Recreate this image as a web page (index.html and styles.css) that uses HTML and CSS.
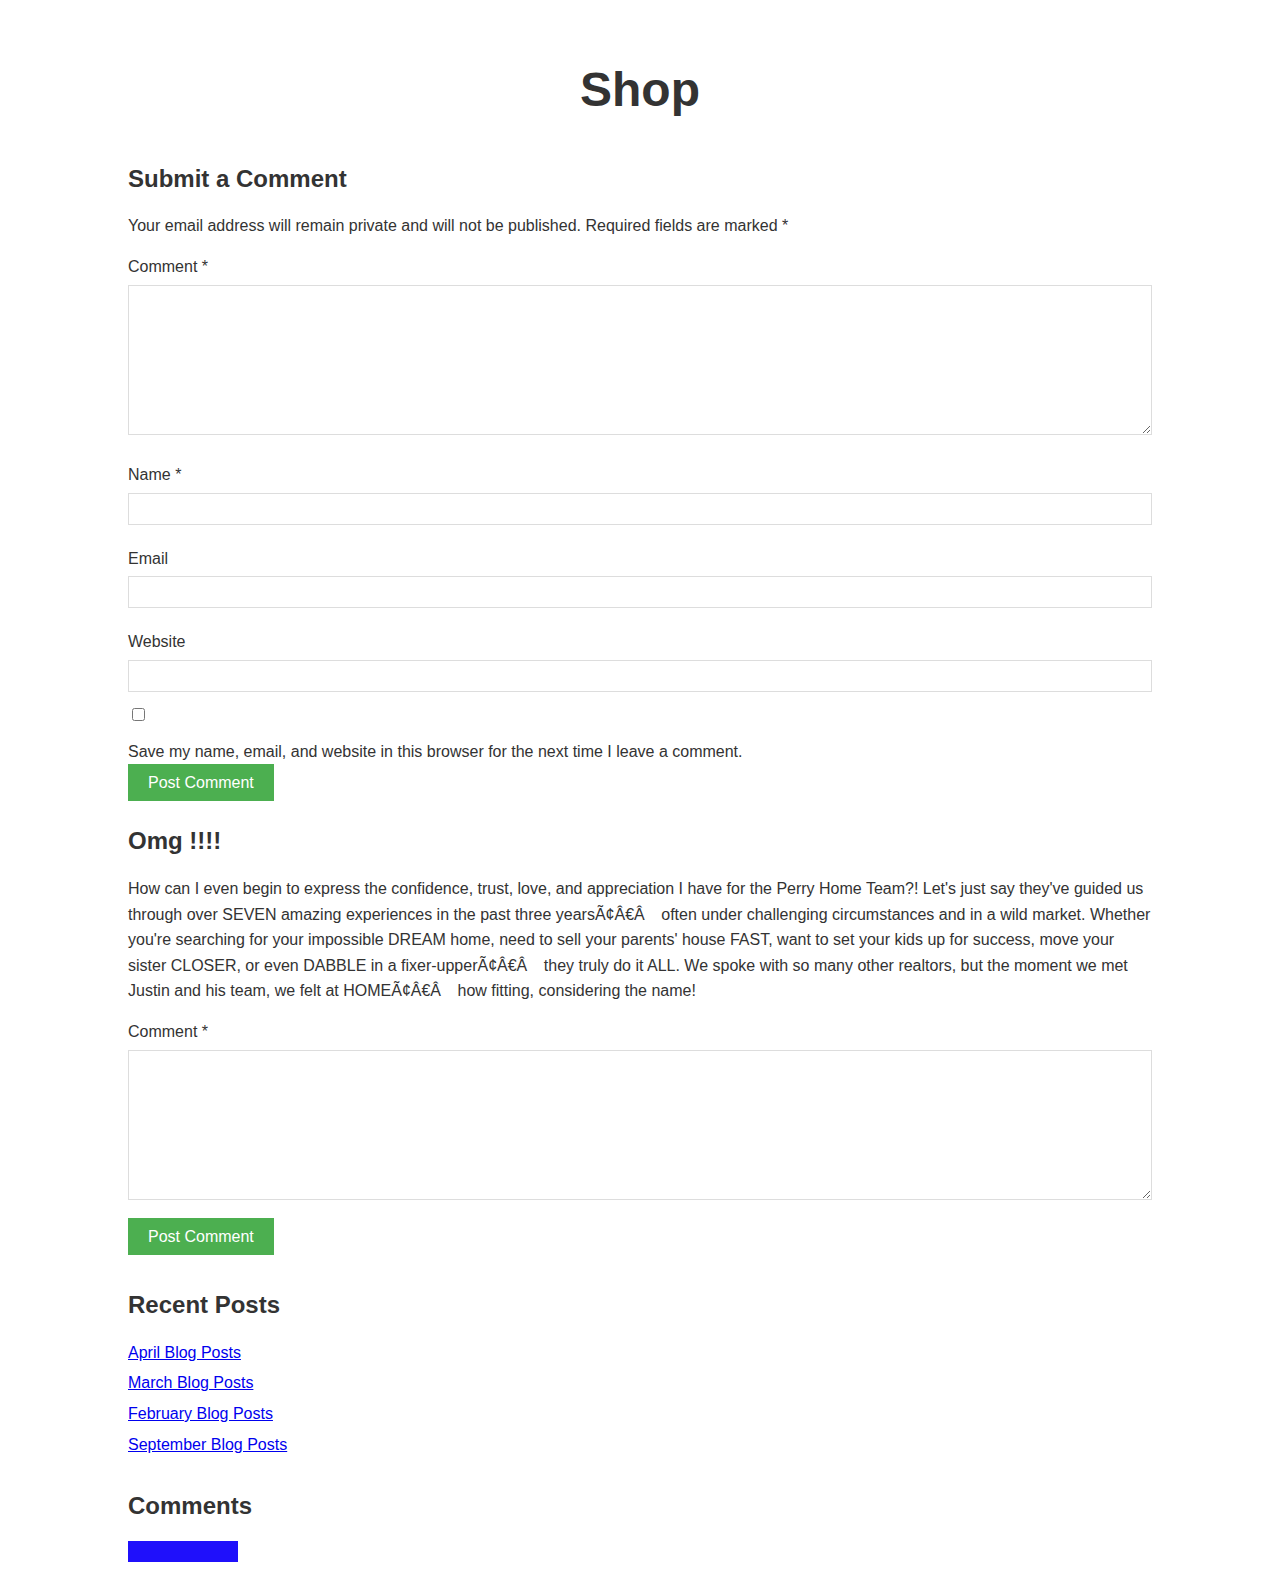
FILE: index.html
```html
<!DOCTYPE html>
<html lang="en">
<head>
<meta charset="utf-8">
<title>Shop</title>
<link rel="stylesheet" href="styles.css">
</head>
<body>
<div class="page">
  <h1 class="page-title">Shop</h1>

  <section class="respond">
    <h2 class="section-title">Submit a Comment</h2>
    <p class="notes">Your email address will remain private and will not be published. Required fields are marked *</p>
    <form class="comment-form">
      <div class="form-group form-group--area">
        <label class="field-label">Comment *</label>
        <textarea class="field field--area"></textarea>
      </div>
      <div class="form-group">
        <label class="field-label">Name *</label>
        <input class="field" type="text">
      </div>
      <div class="form-group">
        <label class="field-label">Email</label>
        <input class="field" type="text">
      </div>
      <div class="form-group form-group--tight">
        <label class="field-label">Website</label>
        <input class="field" type="text">
      </div>
      <div class="consent">
        <input class="consent-box" type="checkbox">
        <label class="consent-label">Save my name, email, and website in this browser for the next time I leave a comment.</label>
      </div>
      <button class="btn" type="button">Post Comment</button>
    </form>
  </section>

  <section class="comment">
    <h2 class="section-title">Omg !!!!</h2>
    <p class="comment-text">How can I even begin to express the confidence, trust, love, and appreciation I have for the Perry Home Team?! Let's just say they've guided us through over SEVEN amazing experiences in the past three yearsÃ¢Â€Â&nbsp;&nbsp;&#8201; often under challenging circumstances and in a wild market. Whether you're searching for your impossible DREAM home, need to sell your parents' house FAST, want to set your kids up for success, move your sister CLOSER, or even DABBLE in a fixer-upperÃ¢Â€Â&nbsp;&nbsp;&#8201; they truly do it ALL. We spoke with so many other realtors, but the moment we met Justin and his team, we felt at HOMEÃ¢Â€Â&nbsp;&nbsp;&#8201; how fitting, considering the name!</p>
    <form class="reply-form">
      <div class="form-group form-group--reply">
        <label class="field-label">Comment *</label>
        <textarea class="field field--area"></textarea>
      </div>
      <button class="btn" type="button">Post Comment</button>
    </form>
  </section>

  <section class="widget widget--posts">
    <h2 class="section-title">Recent Posts</h2>
    <ul class="widget-list">
      <li><a href="#">April Blog Posts</a></li>
      <li><a href="#">March Blog Posts</a></li>
      <li><a href="#">February Blog Posts</a></li>
      <li><a href="#">September Blog Posts</a></li>
    </ul>
  </section>

  <section class="widget widget--comments">
    <h2 class="section-title">Comments</h2>
    <div class="comments-bar"></div>
  </section>
</div>
</body>
</html>
```

FILE: styles.css
```css
html, body {
  margin: 0;
  padding: 0;
  background: #ffffff;
}

body {
  font-family: "Liberation Sans", Arial, sans-serif;
  font-size: 16px;
  line-height: 1.6;
  color: #333333;
}

.page {
  max-width: 1024px;
  margin: 0 auto;
  padding: 61px 0 24px;
}

.page-title {
  margin: 0;
  font-size: 48px;
  line-height: 1.2;
  font-weight: bold;
  text-align: center;
}

.section-title {
  margin: 0 0 20px;
  font-size: 24px;
  line-height: 1.2;
  font-weight: bold;
}

.respond {
  margin-top: 46px;
}

.notes {
  margin: 0 0 15px;
}

.form-group {
  margin-bottom: 21px;
}

.form-group--area {
  margin-bottom: 20px;
}

.form-group--tight {
  margin-bottom: 11px;
}

.form-group--reply {
  margin-bottom: 11px;
}

.field-label {
  display: block;
  margin-bottom: 5px;
}

.field {
  box-sizing: border-box;
  width: 100%;
  height: 32px;
  margin: 0;
  padding: 6px 8px;
  border: 1px solid #dddddd;
  border-radius: 0;
  background: #ffffff;
  font-family: "Liberation Sans", Arial, sans-serif;
  font-size: 16px;
  color: #333333;
  vertical-align: baseline;
}

.field--area {
  height: 150px;
  resize: vertical;
}

.consent {
  line-height: 1.6;
}

.consent-box {
  margin: 3px 3px 3px 4px;
}

.consent-label {
  display: block;
  margin: 10px 0 0;
}

.btn {
  display: block;
  box-sizing: border-box;
  height: 37px;
  margin: 0;
  padding: 0 20px;
  border: none;
  border-radius: 0;
  background: #4caf50;
  color: #ffffff;
  font-family: "Liberation Sans", Arial, sans-serif;
  font-size: 16px;
  line-height: 37px;
  cursor: pointer;
}

.comment {
  margin-top: 26px;
}

.comment-text {
  margin: 0 0 15px;
}

.widget--posts {
  margin-top: 36px;
}

.widget-list {
  list-style: none;
  margin: 0;
  padding: 0;
}

.widget-list li {
  margin-bottom: 5px;
}

.widget-list a {
  color: #0000ee;
  text-decoration: underline;
}

.widget--comments {
  margin-top: 35px;
}

.comments-bar {
  width: 110px;
  height: 21px;
  background: #1f10fb;
}
```
